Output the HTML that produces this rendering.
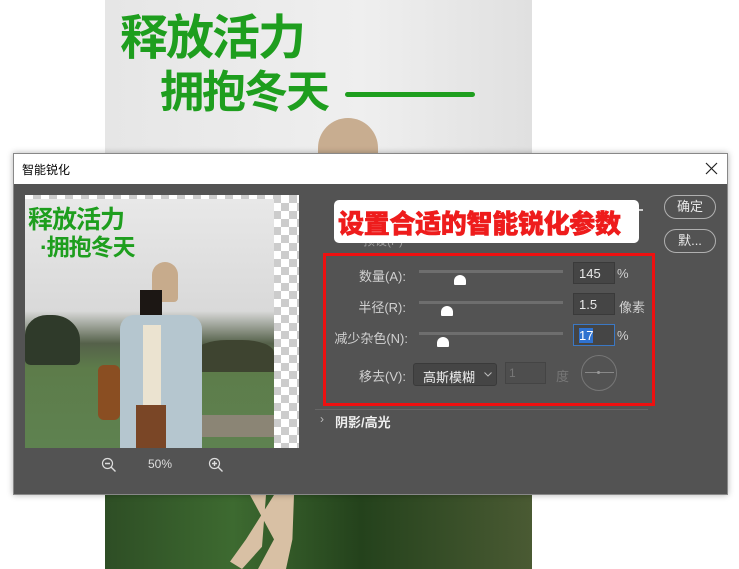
<!DOCTYPE html>
<html><head><meta charset="utf-8"><style>
*{margin:0;padding:0;box-sizing:border-box}
body{width:739px;height:569px;background:#fff;position:relative;overflow:hidden;font-family:"Liberation Sans","Noto Sans CJK SC",sans-serif}
.a{position:absolute}
.g{color:#1e9e1e;font-weight:bold}
.lbl{color:#d0d0d0;font-size:13px;text-align:right;white-space:nowrap}
.inp{background:#454545;border:1px solid #3a3a3a;color:#e8e8e8;font-size:13px;padding:3px 5px;height:22px}
.track{height:3px;background:#6e6e6e}
.thumb{width:12px;height:10px;background:#fff;border-radius:6px 6px 1px 1px}
.btn{border:1px solid #b0b0b0;border-radius:12px;color:#e8e8e8;font-size:13px;text-align:center;width:52px;height:24px;line-height:22px}
</style></head><body>
<div class="a" style="left:105px;top:0;width:427px;height:153px;background:linear-gradient(90deg,#e6e6e6,#efefef 60%,#e0e0e0)"></div>
<div class="a g" style="left:120px;top:-2px;font-size:48px;letter-spacing:-2px">释放活力</div>
<div class="a g" style="left:160px;top:56px;font-size:44px;letter-spacing:-2px">拥抱冬天</div>
<div class="a" style="left:345px;top:92px;width:130px;height:5px;background:#1e9e1e;border-radius:3px"></div>
<div class="a" style="left:318px;top:118px;width:60px;height:40px;background:#c8ad90;border-radius:30px 30px 0 0"></div>
<div class="a" style="left:105px;top:495px;width:427px;height:74px;background:linear-gradient(90deg,#2e4e25,#3d6a30 30%,#24421c 60%,#4a5a33)"></div>
<div class="a" style="left:230px;top:495px;width:80px;height:74px;background:#d8c0a4;clip-path:polygon(25% 0,45% 0,40% 70%,15% 100%,0 90%,20% 60%,55% 0,80% 0,78% 60%,70% 100%,35% 100%,55% 60%)"></div>
<div class="a" style="left:13px;top:153px;width:715px;height:342px;background:#535353;border:1px solid #888;box-shadow:0 0 6px rgba(0,0,0,.3)"></div>
<div class="a" style="left:14px;top:154px;width:713px;height:30px;background:#fff"></div>
<div class="a" style="left:22px;top:161px;font-size:12px;color:#000">智能锐化</div>
<svg class="a" style="left:705px;top:162px" width="13" height="13"><path d="M1 1L12 12M12 1L1 12" stroke="#222" stroke-width="1.2"/></svg>
<div class="a" style="left:25px;top:195px;width:274px;height:253px;background-color:#fff;background-image:linear-gradient(45deg,#ccc 25%,transparent 25%,transparent 75%,#ccc 75%),linear-gradient(45deg,#ccc 25%,transparent 25%,transparent 75%,#ccc 75%);background-size:16px 16px;background-position:0 0,8px 8px"></div>
<div class="a" style="left:25px;top:199px;width:249px;height:249px;background:linear-gradient(180deg,#e8e8e8 0%,#d9d9d9 45%,#55614a 58%,#5d7c4a 68%,#5e8250 100%)"></div>
<div class="a" style="left:25px;top:315px;width:55px;height:50px;background:#2f3a2a;border-radius:40% 50% 10% 10%"></div>
<div class="a" style="left:195px;top:340px;width:79px;height:32px;background:#3e4430;border-radius:40% 40% 0 0"></div>
<div class="a g" style="left:28px;top:200px;font-size:25px;letter-spacing:-1px">释放活力</div>
<div class="a g" style="left:40px;top:228px;font-size:23px;letter-spacing:-1px">·拥抱冬天</div>
<div class="a" style="left:152px;top:262px;width:26px;height:40px;background:#c7ab8c;border-radius:13px 13px 4px 4px"></div>
<div class="a" style="left:140px;top:290px;width:22px;height:60px;background:#1c1714"></div>
<div class="a" style="left:120px;top:315px;width:82px;height:133px;background:#b5c6cf;border-radius:14px 14px 0 0"></div>
<div class="a" style="left:143px;top:325px;width:18px;height:80px;background:#ebe3d0"></div>
<div class="a" style="left:136px;top:405px;width:30px;height:43px;background:#7a4626"></div>
<div class="a" style="left:98px;top:365px;width:22px;height:55px;background:#8a4e22;border-radius:6px"></div>
<div class="a" style="left:202px;top:415px;width:72px;height:22px;background:#8b8575"></div>
<svg class="a" style="left:101px;top:457px" width="16" height="16"><circle cx="6.5" cy="6.5" r="5" fill="none" stroke="#ddd" stroke-width="1.2"/><path d="M4 6.5H9M10 10L14.5 14.5" stroke="#ddd" stroke-width="1.4"/></svg>
<div class="a" style="left:148px;top:457px;font-size:12px;color:#ddd">50%</div>
<svg class="a" style="left:208px;top:457px" width="16" height="16"><circle cx="6.5" cy="6.5" r="5" fill="none" stroke="#ddd" stroke-width="1.2"/><path d="M4 6.5H9M6.5 4V9M10 10L14.5 14.5" stroke="#ddd" stroke-width="1.4"/></svg>
<div class="a" style="left:638px;top:209px;width:5px;height:2px;background:#ccc"></div>
<div class="a" style="left:363px;top:232px;font-size:12px;color:#999">预设(P)</div>
<div class="a" style="left:334px;top:200px;width:305px;height:43px;background:#fff;border-radius:5px"></div>
<div class="a" style="left:338px;top:204px;font-size:26px;font-weight:900;color:#ee1c1c;letter-spacing:-0.3px;white-space:nowrap;-webkit-text-stroke:0.6px #ee1c1c">设置合适的智能锐化参数</div>
<div class="a btn" style="left:664px;top:195px">确定</div>
<div class="a btn" style="left:664px;top:229px">默...</div>
<div class="a" style="left:323px;top:253px;width:332px;height:153px;border:3px solid #ee1010"></div>
<div class="a lbl" style="left:320px;top:266px;width:86px">数量(A):</div>
<div class="a track" style="left:419px;top:270px;width:144px"></div>
<div class="a thumb" style="left:454px;top:275px"></div>
<div class="a inp" style="left:573px;top:262px;width:42px">145</div>
<div class="a lbl" style="left:617px;top:266px;text-align:left">%</div>
<div class="a lbl" style="left:320px;top:297px;width:86px">半径(R):</div>
<div class="a track" style="left:419px;top:301px;width:144px"></div>
<div class="a thumb" style="left:441px;top:306px"></div>
<div class="a inp" style="left:573px;top:293px;width:42px">1.5</div>
<div class="a lbl" style="left:619px;top:297px;text-align:left">像素</div>
<div class="a lbl" style="left:320px;top:328px;width:88px">减少杂色(N):</div>
<div class="a track" style="left:419px;top:332px;width:144px"></div>
<div class="a thumb" style="left:437px;top:337px"></div>
<div class="a inp" style="left:573px;top:324px;width:42px;border-color:#3b78c4"><span style="background:#2f72d0;color:#fff">17</span></div>
<div class="a lbl" style="left:617px;top:328px;text-align:left">%</div>
<div class="a lbl" style="left:320px;top:366px;width:86px">移去(V):</div>
<div class="a" style="left:413px;top:363px;width:84px;height:23px;background:#454545;border:1px solid #3a3a3a;border-radius:3px;color:#eee;font-size:13px;padding:3px 9px;white-space:nowrap">高斯模糊</div>
<svg class="a" style="left:484px;top:372px" width="8" height="5"><path d="M0.5 0.5L4 4L7.5 0.5" fill="none" stroke="#bbb"/></svg>
<div class="a" style="left:505px;top:362px;width:41px;height:22px;border:1px solid #444;background:#4e4e4e;color:#777;font-size:12px;padding:3px 3px">1</div>
<div class="a" style="left:556px;top:366px;font-size:13px;color:#777">度</div>
<div class="a" style="left:581px;top:355px;width:36px;height:36px;border:1px solid #777;border-radius:50%"></div>
<div class="a" style="left:585px;top:372px;width:29px;height:1px;background:#888"></div>
<div class="a" style="left:597px;top:371px;width:3px;height:3px;background:#999;border-radius:50%"></div>
<div class="a" style="left:315px;top:409px;width:333px;height:1px;background:#666"></div>
<div class="a" style="left:320px;top:412px;font-size:12px;color:#bbb">›</div>
<div class="a" style="left:335px;top:412px;font-size:13px;font-weight:bold;color:#eee">阴影/高光</div>
</body></html>
